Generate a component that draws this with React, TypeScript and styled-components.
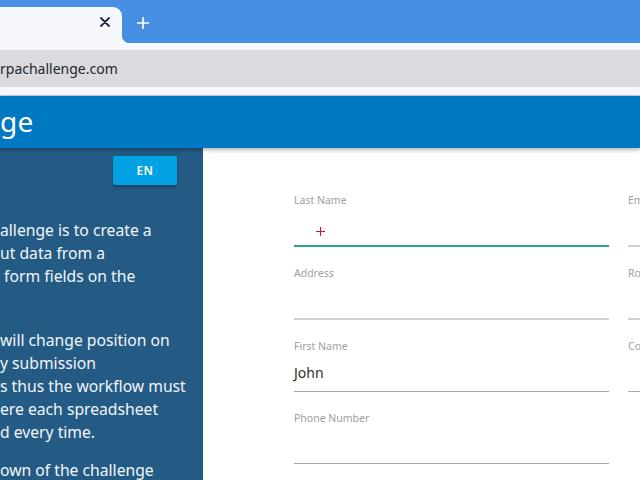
import React from "react";
import styled, { createGlobalStyle } from "styled-components";

const GlobalStyle = createGlobalStyle`
  html, body { margin: 0; padding: 0; width: 640px; height: 480px; overflow: hidden; background: #ffffff; }
  * { box-sizing: border-box; }
`;

const Page = styled.div`
  width: 640px;
  height: 480px;
  display: flex;
  flex-direction: column;
  overflow: hidden;
  font-family: "Noto Sans", "Open Sans", sans-serif;
`;

const TabStrip = styled.div`
  height: 43px;
  background: #478fe3;
  display: flex;
  align-items: flex-end;
  flex-shrink: 0;
`;

const ActiveTab = styled.div`
  position: relative;
  width: 122px;
  height: 36px;
  background: #f6f8fd;
  border-top-right-radius: 9px;
  display: flex;
  align-items: center;
  justify-content: flex-end;
  padding-right: 12px;
  &::after {
    content: "";
    position: absolute;
    right: -8px;
    bottom: 0;
    width: 8px;
    height: 8px;
    background: radial-gradient(circle at 100% 0, transparent 8px, #f6f8fd 8.5px);
  }
`;

const CloseBtn = styled.span`
  display: flex;
  color: #1f2a44;
  margin-bottom: 7px;
`;

const NewTab = styled.span`
  display: flex;
  color: #ffffff;
  margin: 0 0 14px 15px;
`;

const Toolbar = styled.div`
  background: #f6f8fd;
  padding: 7px 0 8px;
  flex-shrink: 0;
  border-bottom: 1px solid #c9ccd3;
`;

const Omnibox = styled.div`
  height: 37px;
  background: #dbdbdf;
  display: flex;
  align-items: center;
  font-family: "Noto Sans", "Open Sans", sans-serif;
  font-size: 14px;
  color: #24272b;
`;

const Header = styled.div`
  height: 52px;
  background: #0079c2;
  display: flex;
  align-items: center;
  flex-shrink: 0;
  box-shadow: 0 2px 4px rgba(0, 0, 0, 0.3);
  position: relative;
  z-index: 1;
`;

const Title = styled.h1`
  margin: -2px 0 0 0;
  font-family: "Noto Sans", sans-serif;
  font-weight: 400;
  font-size: 28px;
  color: #ffffff;
  letter-spacing: 0.3px;
`;

const Main = styled.div`
  flex: 1;
  display: flex;
  min-height: 0;
`;

const Sidebar = styled.aside`
  width: 203px;
  flex-shrink: 0;
  background: #235b85;
  padding-top: 8px;
  display: flex;
  flex-direction: column;
  overflow: hidden;
`;

const LangButton = styled.button`
  flex-shrink: 0;
  align-self: flex-start;
  margin-left: 113px;
  width: 64px;
  height: 29px;
  border: none;
  border-radius: 2px;
  background: #00a2e3;
  color: #ffffff;
  font-family: "Noto Sans", sans-serif;
  font-weight: 600;
  font-size: 12px;
  letter-spacing: 0.5px;
  box-shadow: 0 2px 3px rgba(0, 0, 0, 0.3);
`;

const Intro = styled.div`
  flex-shrink: 0;
  margin-top: 34px;
  color: #f2f5f8;
  font-family: "Noto Sans", sans-serif;
  font-size: 15.7px;
  line-height: 23px;
`;

const Para = styled.p<{ $gap?: number }>`
  margin: 0 0 ${(p) => p.$gap ?? 18}px 0;
`;

const Line = styled.span`
  display: block;
  white-space: pre;
  height: 23px;
`;

const Content = styled.section`
  flex: 1;
  background: #ffffff;
  overflow: hidden;
  padding: 44px 0 0 91px;
  position: relative;
`;

const FieldGrid = styled.div`
  display: grid;
  grid-template-columns: 315px 315px;
  column-gap: 19px;
  row-gap: 18px;
`;

const Field = styled.div`
  display: flex;
  flex-direction: column;
`;

const Label = styled.label`
  font-family: "Noto Sans", sans-serif;
  font-size: 10.5px;
  line-height: 16px;
  color: #a0a0a0;
  white-space: nowrap;
`;

const Input = styled.div<{ $active?: boolean; $thin?: boolean }>`
  height: ${(p) => (p.$thin ? 38 : 39)}px;
  padding-top: 3px;
  line-height: 32px;
  font-family: "Noto Sans", sans-serif;
  font-size: 14px;
  color: #2d2d2d;
  border-bottom: ${(p) =>
    p.$active ? "2px solid #2aa48a" : p.$thin ? "1px solid #a8a8a8" : "2px solid #d0d0d0"};
`;

const Cursor = styled.span`
  position: absolute;
  left: 113px;
  top: 79px;
  width: 9px;
  height: 9px;
  &::before, &::after {
    content: "";
    position: absolute;
    background: #e01010;
  }
  &::before { left: 4px; top: 0; width: 1px; height: 9px; }
  &::after { left: 0; top: 4px; width: 9px; height: 1px; }
`;

const fields: { label: string; value?: string; active?: boolean; thin?: boolean }[] = [
  { label: "Last Name", active: true },
  { label: "Email" },
  { label: "Address" },
  { label: "Role in Company" },
  { label: "First Name", value: "John", thin: true },
  { label: "Company Name", thin: true },
  { label: "Phone Number", thin: true },
];

export default function App() {
  return (
    <>
      <GlobalStyle />
      <Page>
        <TabStrip>
          <ActiveTab>
            <CloseBtn>
              <svg width="10" height="10" viewBox="0 0 10 10">
                <path d="M1 1 L9 9 M9 1 L1 9" stroke="currentColor" strokeWidth="1.8" strokeLinecap="round" />
              </svg>
            </CloseBtn>
          </ActiveTab>
          <NewTab>
            <svg width="12" height="12" viewBox="0 0 12 12">
              <path d="M6 0.5 V11.5 M0.5 6 H11.5" stroke="currentColor" strokeWidth="1.6" strokeLinecap="round" />
            </svg>
          </NewTab>
        </TabStrip>
        <Toolbar>
          <Omnibox>rpachallenge.com</Omnibox>
        </Toolbar>
        <Header>
          <Title>ge</Title>
        </Header>
        <Main>
          <Sidebar>
            <LangButton>EN</LangButton>
            <Intro>
              <Para>
                <Line>allenge is to create a</Line>
                <Line>ut data from a</Line>
                <Line> form fields on the</Line>
                <Line> </Line>
              </Para>
              <Para $gap={15}>
                <Line>will change position on</Line>
                <Line>y submission</Line>
                <Line>s thus the workflow must</Line>
                <Line>ere each spreadsheet</Line>
                <Line>d every time.</Line>
              </Para>
              <Para>
                <Line>own of the challenge</Line>
              </Para>
            </Intro>
          </Sidebar>
          <Content>
            <FieldGrid>
              {fields.map((f) => (
                <Field key={f.label}>
                  <Label>{f.label}</Label>
                  <Input $active={f.active} $thin={f.thin}>{f.value}</Input>
                </Field>
              ))}
            </FieldGrid>
            <Cursor />
          </Content>
        </Main>
      </Page>
    </>
  );
}
